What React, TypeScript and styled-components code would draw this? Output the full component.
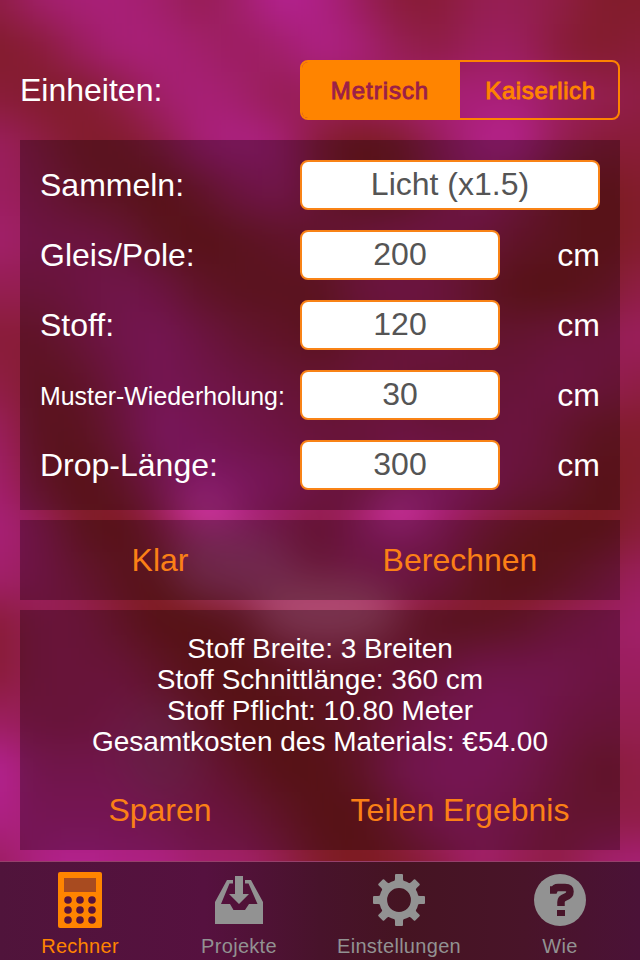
import React, { useState } from "react";
import styled, { createGlobalStyle } from "styled-components";

const ORANGE = "#ff8400";
const SANS = '"Liberation Sans", Arial, sans-serif';

const GlobalStyle = createGlobalStyle`
  * { box-sizing: border-box; }
  body { margin: 0; background: #8c1c50; }
`;

const Screen = styled.main`
  position: relative;
  isolation: isolate;
  display: flex;
  flex-direction: column;
  width: 640px;
  height: 960px;
  overflow: hidden;
  color: #fff;
  font-family: ${SANS};
  font-size: 32px;
`;

const Backdrop = styled.svg`
  position: absolute;
  inset: 0;
  z-index: -1;
`;

const UnitsRow = styled.header`
  display: flex;
  justify-content: space-between;
  align-items: center;
  height: 60px;
  margin: 60px 20px 20px;
`;

const Segments = styled.div`
  display: flex;
  width: 320px;
  height: 60px;
  border: 2px solid ${ORANGE};
  border-radius: 8px;
  overflow: hidden;
`;

const Segment = styled.button<{ $active: boolean }>`
  flex: 0 0 158px;
  padding: 2px 0 0 3px;
  border: 0;
  background: ${(p) => (p.$active ? ORANGE : "transparent")};
  color: ${(p) => (p.$active ? "#9b2048" : ORANGE)};
  font: 24px ${SANS};
  letter-spacing: 0.65px;
  -webkit-text-stroke: 0.9px currentColor;

  &:first-child {
    padding: 2px 2px 0 0;
    letter-spacing: 0.95px;
  }
`;

const Panel = styled.section<{ $height: number }>`
  display: flex;
  flex-direction: column;
  flex: none;
  height: ${(p) => p.$height}px;
  margin: 0 20px 10px;
  background: rgba(0, 0, 0, 0.3);
`;

const Fields = styled.div`
  display: grid;
  gap: 20px;
  padding: 20px;
`;

const FieldRow = styled.label`
  display: grid;
  grid-template-columns: 260px 200px 100px;
  align-items: center;
  height: 50px;
`;

const FieldName = styled.span<{ $small?: boolean }>`
  padding-top: ${(p) => (p.$small ? 2 : 0)}px;
  font-size: ${(p) => (p.$small ? 24.9 : 32)}px;
  white-space: nowrap;
`;

const Field = styled.input<{ $wide?: boolean }>`
  grid-column: ${(p) => (p.$wide ? "span 2" : "auto")};
  width: 100%;
  height: 50px;
  padding: 0 0 2px;
  border: 2px solid #f98317;
  border-radius: 8px;
  background: #fff;
  color: #555;
  font: 32px ${SANS};
  text-align: center;
`;

const Unit = styled.span`
  text-align: right;
`;

const Actions = styled.div`
  display: grid;
  grid-template-columns: 280px 320px;
  height: 80px;
`;

const Action = styled.button`
  padding: 0;
  border: 0;
  background: none;
  color: #fb8016;
  font: 32px ${SANS};
`;

const Results = styled.div`
  height: 160px;
  padding-top: 23px;
  font-size: 28px;
  line-height: 31px;
  text-align: center;
`;

const TabBar = styled.nav`
  display: grid;
  grid-template-columns: 160px 158px 162px 160px;
  height: 99px;
  margin-top: auto;
  border-top: 1px solid #96406b;
  background: linear-gradient(90deg, #50143b 0, #56113f 32%, #48132b 50%, #451422 63%, #491429 82%, #4b1237 100%);
`;

const Tab = styled.button<{ $active: boolean }>`
  display: flex;
  flex-direction: column;
  align-items: center;
  padding: 8px 0 0;
  border: 0;
  background: none;
  color: ${(p) => (p.$active ? ORANGE : "#929292")};
  font: 20px/24px ${SANS};
  letter-spacing: 0.3px;

  svg { display: block; margin-bottom: 4px; }
`;

/*
 * Satin curtain: each digit is the sheen of one 40x48 patch of cloth,
 * 0 for a deep red fold and 9 for the brightest magenta. A blur melts them.
 */
const sheen = [
  "36776469852244311",
  "12577656874355212",
  "21136764556777543",
  "53113787201588422",
  "54210256311464101",
  "65541012345542101",
  "44565211145420013",
  "22467532134533445",
  "31257654344344543",
  "51148765445445311",
  "62026987546864301",
  "75103675367631002",
  "65310244455410135",
  "24420013432112456",
  "24442001223466655",
  "54454200124677544",
  "96665420026776423",
  "87776542003665333",
  "58988664101364367",
  "58988664101364367",
];

const mix = (digit: string) => {
  const t = Number(digit) / 8;
  const channel = (from: number, to: number) => Math.round(from + (to - from) * t);
  return `rgb(${channel(124, 174)}, ${channel(27, 32)}, ${channel(31, 132)})`;
};

const patches = sheen.flatMap((row, j) =>
  [row[0], ...row, row[16]].flatMap((digit, i) => {
    const patch = { x: (i - 1) * 40 - 20, y: j * 48 - 24, fill: mix(digit) };
    return j === 0 ? [{ ...patch, y: -72 }, patch] : [patch];
  }),
);

type Glow = [cx: number, cy: number, rx: number, ry: number, color: string, opacity: number];
const glows: Glow[] = [
  [204, 508, 34, 20, "#dd3aac", 0.8],
  [398, 510, 28, 20, "#d838ac", 0.8],
  [328, 612, 74, 34, "#b85a7c", 0.75],
  [232, 566, 66, 36, "#a8487c", 0.65],
  [160, 750, 40, 50, "#8b3a66", 0.45],
  [504, 140, 30, 24, "#bb2490", 0.7],
];

const CurtainBackdrop = () => (
  <Backdrop width="640" height="960" viewBox="0 0 640 960" aria-hidden="true">
    <defs>
      <filter id="melt" filterUnits="userSpaceOnUse" x="-60" y="-72" width="760" height="1100" colorInterpolationFilters="sRGB">
        <feGaussianBlur stdDeviation="19" />
      </filter>
    </defs>
    <g filter="url(#melt)">
      {patches.map(({ x, y, fill }) => (
        <rect key={`${x},${y}`} x={x} y={y} width="40" height="48" fill={fill} />
      ))}
      {glows.map(([cx, cy, rx, ry, color, opacity]) => (
        <ellipse key={`${cx},${cy}`} cx={cx} cy={cy} rx={rx} ry={ry} fill={color} opacity={opacity} />
      ))}
    </g>
  </Backdrop>
);

const CalculatorIcon = () => (
  <svg width="60" height="60" viewBox="0 0 60 60">
    <rect x="8" y="2" width="44" height="56" rx="2" fill={ORANGE} />
    <rect x="14" y="8" width="32" height="14" fill="#a84b20" />
    {[30, 40, 50].map((y) => [18, 30, 42].map((x) => (
      <circle key={`${x}-${y}`} cx={x} cy={y} r="3.8" fill="#57143c" />
    )))}
  </svg>
);

const TrayIcon = () => (
  <svg width="60" height="60" viewBox="0 0 60 60" fill="currentColor">
    <path d="M18 10H24V13.5H20.5L12 34H21L24.5 40H36L40 34H48.5L39.5 13.5H36V10H42L54 32V54H6V32Z" />
    <path d="M26 6H34V24H40L30 34L20 24H26Z" />
  </svg>
);

const GearIcon = () => (
  <svg width="60" height="60" viewBox="0 0 60 60" fill="currentColor">
    <circle cx="30" cy="30" r="15.8" fill="none" stroke="currentColor" strokeWidth="7.8" />
    {[0, 45, 90, 135, 180, 225, 270, 315].map((turn) => (
      <path key={turn} transform={`rotate(${turn} 30 30)`} d="M21 15Q26 12 26 9V5Q26 4 27 4H33Q34 4 34 5V9Q34 12 39 15Z" />
    ))}
  </svg>
);

const HelpIcon = () => (
  <svg width="60" height="60" viewBox="0 0 60 60">
    <circle cx="30" cy="30" r="26" fill="currentColor" />
    <path d="M20 20H24Q25 17.5 28 17.5H35Q40 17.5 40 21.5Q40 25.5 35.5 27Q31 28.5 31 32V36" fill="none" stroke="#481429" strokeWidth="7.5" />
    <rect x="27" y="40" width="8" height="6" fill="#481429" />
  </svg>
);

const units = ["Metrisch", "Kaiserlich"];
const measures = [
  { name: "Gleis/Pole:", value: "200" },
  { name: "Stoff:", value: "120" },
  { name: "Muster-Wiederholung:", value: "30", small: true },
  { name: "Drop-Länge:", value: "300" },
];
const results = [
  "Stoff Breite: 3 Breiten",
  "Stoff Schnittlänge: 360 cm",
  "Stoff Pflicht: 10.80 Meter",
  "Gesamtkosten des Materials: €54.00",
];
const tabs = [
  { name: "Rechner", Icon: CalculatorIcon },
  { name: "Projekte", Icon: TrayIcon },
  { name: "Einstellungen", Icon: GearIcon },
  { name: "Wie", Icon: HelpIcon },
];

export default function App() {
  const [unit, setUnit] = useState("Metrisch");
  const [tab, setTab] = useState("Rechner");

  return (
    <Screen>
      <GlobalStyle />
      <CurtainBackdrop />
      <UnitsRow>
        <span>Einheiten:</span>
        <Segments>
          {units.map((name) => (
            <Segment key={name} $active={name === unit} onClick={() => setUnit(name)}>{name}</Segment>
          ))}
        </Segments>
      </UnitsRow>
      <Panel $height={370}>
        <Fields>
          <FieldRow>
            <FieldName>Sammeln:</FieldName>
            <Field $wide defaultValue="Licht (x1.5)" />
          </FieldRow>
          {measures.map(({ name, value, small }) => (
            <FieldRow key={name}>
              <FieldName $small={small}>{name}</FieldName>
              <Field defaultValue={value} />
              <Unit>cm</Unit>
            </FieldRow>
          ))}
        </Fields>
      </Panel>
      <Panel $height={80}>
        <Actions>
          <Action>Klar</Action>
          <Action>Berechnen</Action>
        </Actions>
      </Panel>
      <Panel $height={240}>
        <Results>
          {results.map((line) => <div key={line}>{line}</div>)}
        </Results>
        <Actions>
          <Action>Sparen</Action>
          <Action>Teilen Ergebnis</Action>
        </Actions>
      </Panel>
      <TabBar>
        {tabs.map(({ name, Icon }) => (
          <Tab key={name} $active={name === tab} onClick={() => setTab(name)}>
            <Icon />
            {name}
          </Tab>
        ))}
      </TabBar>
    </Screen>
  );
}
